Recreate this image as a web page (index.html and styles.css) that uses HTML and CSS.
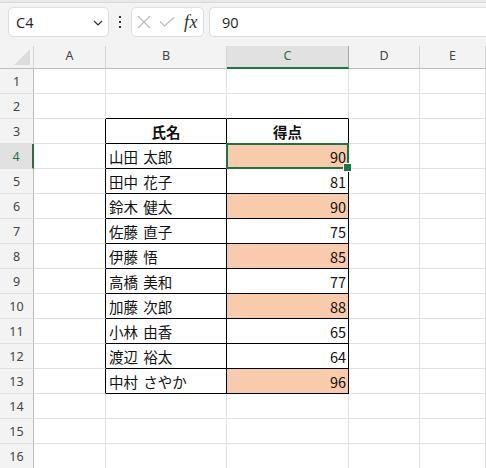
FILE: index.html
```html
<!DOCTYPE html>
<html lang="ja">
<head>
<meta charset="utf-8">
<title>Sheet</title>
<link rel="stylesheet" href="styles.css">
</head>
<body>
<div class="app">
  <div class="topstrip"></div>
  <div class="toolbar">
    <div class="namebox">
      <span class="ref">C4</span>
      <svg class="chev" width="10" height="6" viewBox="0 0 10 6"><path d="M1 1 L5 5 L9 1" fill="none" stroke="#333" stroke-width="1.2"/></svg>
    </div>
    <div class="dots"><i></i><i></i><i></i></div>
    <div class="fxbox">
      <svg width="14" height="14" viewBox="0 0 14 14"><path d="M1 1 L13 13 M13 1 L1 13" stroke="#bdbdbd" stroke-width="1.2" fill="none"/></svg>
      <svg width="16" height="10" viewBox="0 0 16 10"><path d="M1 4.5 L5.5 9 L15 0.5" stroke="#bdbdbd" stroke-width="1.2" fill="none"/></svg>
      <span class="fx">fx</span>
    </div>
    <div class="formula">90</div>
  </div>
  <div class="sheet">
    <div class="c corner"><span class="tri"></span></div>
    <div class="c ch">A</div>
    <div class="c ch">B</div>
    <div class="c ch sel">C</div>
    <div class="c ch">D</div>
    <div class="c ch">E</div>

    <div class="c rh">1</div><div class="c"></div><div class="c"></div><div class="c"></div><div class="c"></div><div class="c"></div>
    <div class="c rh">2</div><div class="c"></div><div class="c tt"></div><div class="c tt"></div><div class="c"></div><div class="c"></div>

    <div class="c rh">3</div><div class="c tl"></div><div class="c tb hd">氏名</div><div class="c tb hd">得点</div><div class="c"></div><div class="c"></div>
    <div class="c rh sel">4</div><div class="c tl"></div><div class="c tb name">山田 太郎</div><div class="c tb num fill cur">90</div><div class="c"></div><div class="c"></div>
    <div class="c rh">5</div><div class="c tl"></div><div class="c tb name">田中 花子</div><div class="c tb num">81</div><div class="c"></div><div class="c"></div>
    <div class="c rh">6</div><div class="c tl"></div><div class="c tb name">鈴木 健太</div><div class="c tb num fill">90</div><div class="c"></div><div class="c"></div>
    <div class="c rh">7</div><div class="c tl"></div><div class="c tb name">佐藤 直子</div><div class="c tb num">75</div><div class="c"></div><div class="c"></div>
    <div class="c rh">8</div><div class="c tl"></div><div class="c tb name">伊藤 悟</div><div class="c tb num fill">85</div><div class="c"></div><div class="c"></div>
    <div class="c rh">9</div><div class="c tl"></div><div class="c tb name">高橋 美和</div><div class="c tb num">77</div><div class="c"></div><div class="c"></div>
    <div class="c rh">10</div><div class="c tl"></div><div class="c tb name">加藤 次郎</div><div class="c tb num fill">88</div><div class="c"></div><div class="c"></div>
    <div class="c rh">11</div><div class="c tl"></div><div class="c tb name">小林 由香</div><div class="c tb num">65</div><div class="c"></div><div class="c"></div>
    <div class="c rh">12</div><div class="c tl"></div><div class="c tb name">渡辺 裕太</div><div class="c tb num">64</div><div class="c"></div><div class="c"></div>
    <div class="c rh">13</div><div class="c tl"></div><div class="c tb name">中村 さやか</div><div class="c tb num fill">96</div><div class="c"></div><div class="c"></div>

    <div class="c rh">14</div><div class="c"></div><div class="c"></div><div class="c"></div><div class="c"></div><div class="c"></div>
    <div class="c rh">15</div><div class="c"></div><div class="c"></div><div class="c"></div><div class="c"></div><div class="c"></div>
    <div class="c rh">16</div><div class="c"></div><div class="c"></div><div class="c"></div><div class="c"></div><div class="c"></div>
  </div>
</div>
</body>
</html>
```
FILE: styles.css
```css
* { box-sizing: border-box; }
html, body { margin: 0; padding: 0; }
body {
  width: 486px;
  height: 468px;
  overflow: hidden;
  background: #f3f3f3;
  font-family: "Noto Sans CJK JP", "Noto Sans", sans-serif;
}
.app { display: flex; flex-direction: column; }
.topstrip {
  height: 3px;
  background: #e8e8e8;
  border-bottom: 1px solid #d9d9d9;
}
.toolbar {
  height: 43px;
  display: flex;
  align-items: flex-start;
  padding-top: 4px;
  padding-left: 8px;
}
.namebox {
  width: 101px;
  height: 30px;
  background: #fff;
  border: 1px solid #dedede;
  border-radius: 5px;
  display: flex;
  align-items: center;
  justify-content: space-between;
  padding: 0 5px 0 7px;
}
.ref {
  font-family: "Open Sans", "Noto Sans", sans-serif;
  font-size: 14.5px;
  color: #222;
  padding-top: 1px;
}
.chev { margin-top: 1px; }
.dots {
  width: 22px;
  height: 30px;
  display: flex;
  flex-direction: column;
  align-items: center;
  justify-content: center;
  gap: 3px;
}
.dots i {
  display: block;
  width: 2px;
  height: 2px;
  background: #333;
}
.fxbox {
  width: 73px;
  height: 30px;
  background: #fff;
  border: 1px solid #dedede;
  border-radius: 5px;
  display: flex;
  align-items: center;
  padding-left: 5px;
  gap: 8px;
}
.fx {
  font-family: "Liberation Serif", serif;
  font-style: italic;
  font-size: 18px;
  color: #333;
  margin-left: 1px;
  letter-spacing: 0.5px;
}
.formula {
  flex: 1;
  height: 30px;
  margin-left: 5px;
  background: #fff;
  border: 1px solid #dedede;
  border-right: none;
  border-radius: 5px 0 0 5px;
  font-family: "Open Sans", "Noto Sans", sans-serif;
  font-size: 14.5px;
  color: #222;
  display: flex;
  align-items: center;
  padding-left: 12px;
  padding-top: 1px;
}
.sheet {
  display: grid;
  grid-template-columns: 34px 72px 121px 122px 71px 1fr;
  grid-template-rows: 23px;
  grid-auto-rows: 25px;
  background: #fff;
}
.c {
  border-right: 1px solid #e1e1e1;
  border-bottom: 1px solid #e1e1e1;
  display: flex;
  align-items: center;
  font-size: 14.5px;
  color: #111;
  white-space: nowrap;
  position: relative;
}
.corner {
  background: #f3f3f3;
  border-right: 1px solid #d4d4d4;
  border-bottom: 1px solid #bdbdbd;
  justify-content: flex-end;
  align-items: flex-end;
  padding: 0 3px 3px 0;
}
.tri {
  width: 0;
  height: 0;
  border-left: 16px solid transparent;
  border-bottom: 16px solid #dcdcdc;
}
.ch {
  background: #f3f3f3;
  border-right: 1px solid #d4d4d4;
  border-bottom: 1px solid #bdbdbd;
  justify-content: center;
  align-items: flex-start;
  padding-top: 1px;
  font-family: "Noto Sans", sans-serif;
  font-size: 12.5px;
  color: #444;
}
.ch.sel {
  background: #e1e1e1;
  color: #217346;
  border-bottom: 2px solid #217346;
  border-right-color: #a8a8a8;
}
.rh {
  background: #f3f3f3;
  border-right: 1px solid #bdbdbd;
  border-bottom: 1px solid #e1e1e1;
  justify-content: center;
  font-family: "Noto Sans", sans-serif;
  font-size: 12.5px;
  color: #444;
  padding-top: 1px;
}
.rh.sel {
  background: #e1e1e1;
  color: #217346;
  border-right: 2px solid #217346;
}
.tt { border-bottom-color: #000; }
.tl { border-right-color: #000; }
.tb { border-right-color: #000; border-bottom-color: #000; }
.hd {
  font-weight: bold;
  justify-content: center;
}
.name {
  padding-left: 3px;
  word-spacing: 2px;
}
.num {
  justify-content: flex-end;
  padding-right: 2px;
}
.fill { background: #f8cbad; }
.cur::after {
  content: "";
  position: absolute;
  left: -1px;
  top: -1px;
  right: -1px;
  bottom: -1px;
  border: 2px solid #217346;
}
.cur::before {
  content: "";
  position: absolute;
  right: -4px;
  bottom: -4px;
  width: 7px;
  height: 7px;
  background: #217346;
  border: 1px solid #fff;
  z-index: 2;
}
```
